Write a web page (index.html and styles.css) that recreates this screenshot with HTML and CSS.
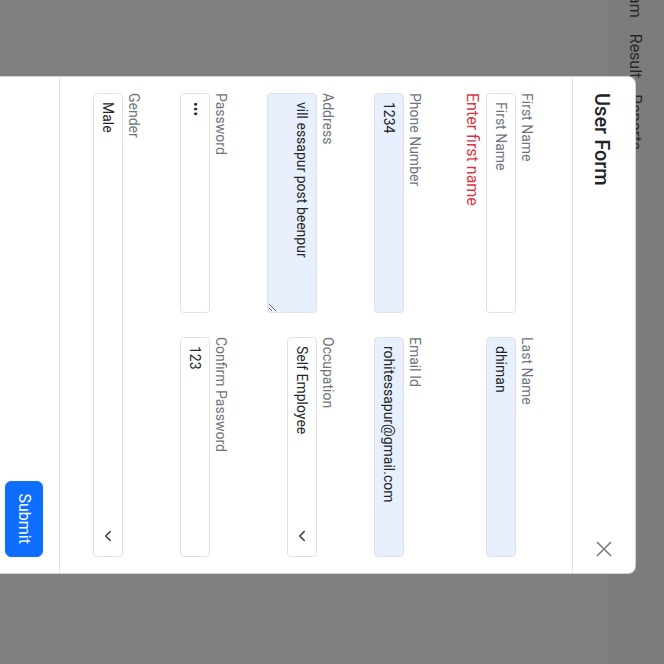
FILE: index.html
```html
<!DOCTYPE html>
<html>
<head>
<title>User Form</title>
<meta name="viewport" content="width=device-width, initial-scale=1.0">
<link rel="stylesheet" href="styles.css">
</head>
<body>

<div class="screen">
    <nav class="navbar">
        <ul class="nav-links">
            <li><a href="#">Exam</a></li>
            <li><a href="#">Result</a></li>
            <li><a href="#">Reports</a></li>
        </ul>
    </nav>

    <div class="backdrop"></div>

    <div class="modal">
        <div class="modal-content">
            <div class="modal-header">
                <h5 class="modal-title">User Form</h5>
                <button type="button" class="btn-close" aria-label="Close">
                    <svg viewBox="0 0 16 16" width="16" height="16"><path d="M1 1L15 15M15 1L1 15" stroke="currentColor" stroke-width="1.6" fill="none"/></svg>
                </button>
            </div>

            <form class="modal-body">
                <div class="field">
                    <label>First Name</label>
                    <input type="text" placeholder="First Name">
                    <div class="invalid">Enter first name</div>
                </div>
                <div class="field">
                    <label>Last Name</label>
                    <input type="text" class="filled" value="dhiman">
                </div>

                <div class="field">
                    <label>Phone Number</label>
                    <input type="text" class="filled" value="1234">
                </div>
                <div class="field">
                    <label>Email Id</label>
                    <input type="email" class="filled" value="rohitessapur@gmail.com">
                </div>

                <div class="field">
                    <label>Address</label>
                    <textarea class="filled" rows="2">vill essapur post beenpur</textarea>
                </div>
                <div class="field">
                    <label>Occupation</label>
                    <div class="select-box">
                        <select>
                            <option>Self Employee</option>
                            <option>Job</option>
                            <option>Student</option>
                        </select>
                        <svg class="chevron" viewBox="0 0 16 16" width="16" height="12"><path d="m2 5 6 6 6-6" fill="none" stroke="#343a40" stroke-width="2" stroke-linecap="round" stroke-linejoin="round"/></svg>
                    </div>
                </div>

                <div class="field">
                    <label>Password</label>
                    <input type="password" value="123">
                </div>
                <div class="field">
                    <label>Confirm Password</label>
                    <input type="text" value="123">
                </div>

                <div class="field full">
                    <label>Gender</label>
                    <div class="select-box">
                        <select>
                            <option>Male</option>
                            <option>Female</option>
                        </select>
                        <svg class="chevron" viewBox="0 0 16 16" width="16" height="12"><path d="m2 5 6 6 6-6" fill="none" stroke="#343a40" stroke-width="2" stroke-linecap="round" stroke-linejoin="round"/></svg>
                    </div>
                </div>
            </form>

            <div class="modal-footer">
                <button type="button" class="btn-submit">Submit</button>
            </div>
        </div>
    </div>
</div>

</body>
</html>
```

FILE: styles.css
```css
body { margin: 0; overflow: hidden; font-family: Roboto, "Liberation Sans", sans-serif; font-size: 16px; color: #212529; background-color: #808080; }

/* whole page is shown turned a quarter clockwise */
.screen { position: relative; width: 664px; height: 664px; overflow: hidden; background-color: #fff; transform: rotate(90deg); }

.navbar { height: 56px; padding: 8px 0; box-sizing: border-box; background-color: #f8f9fa; }
.nav-links { display: flex; list-style: none; margin: 0 0 0 -30px; padding: 0; }
.nav-links a { display: block; padding: 9px 8px 7px; line-height: 24px; color: rgba(0, 0, 0, 0.7); text-decoration: none; }

.backdrop { position: absolute; inset: 0; background-color: rgba(0, 0, 0, 0.5); }
.modal { position: absolute; inset: 0; }

.modal-content { width: 498px; margin: 28px 0 0 76px; box-sizing: border-box; background-color: #fff; border: 1px solid rgba(0, 0, 0, 0.175); border-radius: 8px; }

.modal-header { display: flex; align-items: center; justify-content: space-between; padding: 16px; border-bottom: 1px solid #dee2e6; }
.modal-title { margin: 0; font-size: 20px; font-weight: 500; line-height: 30px; padding-top: 2px; margin-bottom: -2px; }
.btn-close { display: flex; padding: 0; border: none; background: none; color: #7d7d7d; }

.modal-body { display: grid; grid-template-columns: 1fr 1fr; column-gap: 24px; align-items: start; padding: 16px; margin: 0; }
.field { margin: 19px 0 17px; }
.field.full { grid-column: 1 / -1; }
.field label { display: block; font-size: 14px; line-height: 21px; color: #6c757d; }

input, textarea, select { display: block; width: 100%; box-sizing: border-box; height: 30px; padding: 4px 8px; margin: 0; font-family: Roboto, "Liberation Sans", sans-serif; font-size: 14px; line-height: 20px; color: #212529; background-color: #fff; border: 1px solid #dee2e6; border-radius: 4px; outline: none; }
input::placeholder { color: #6c757d; }
textarea { height: 50px; resize: vertical; }
.filled { background-color: #e8f0fe; }

.select-box { position: relative; }
.select-box select { appearance: none; -webkit-appearance: none; padding-right: 36px; }
.chevron { position: absolute; right: 13px; top: 9px; pointer-events: none; }

.invalid { margin-top: 2px; font-size: 16px; line-height: 23px; color: #dc3545; }

.modal-footer { display: flex; justify-content: flex-end; padding: 12px; border-top: 1px solid #dee2e6; }
.btn-submit { margin: 4px; padding: 6px 12px; font-family: Roboto, "Liberation Sans", sans-serif; font-size: 16px; line-height: 24px; color: #fff; background-color: #0d6efd; border: 1px solid #0d6efd; border-radius: 6px; }
```
